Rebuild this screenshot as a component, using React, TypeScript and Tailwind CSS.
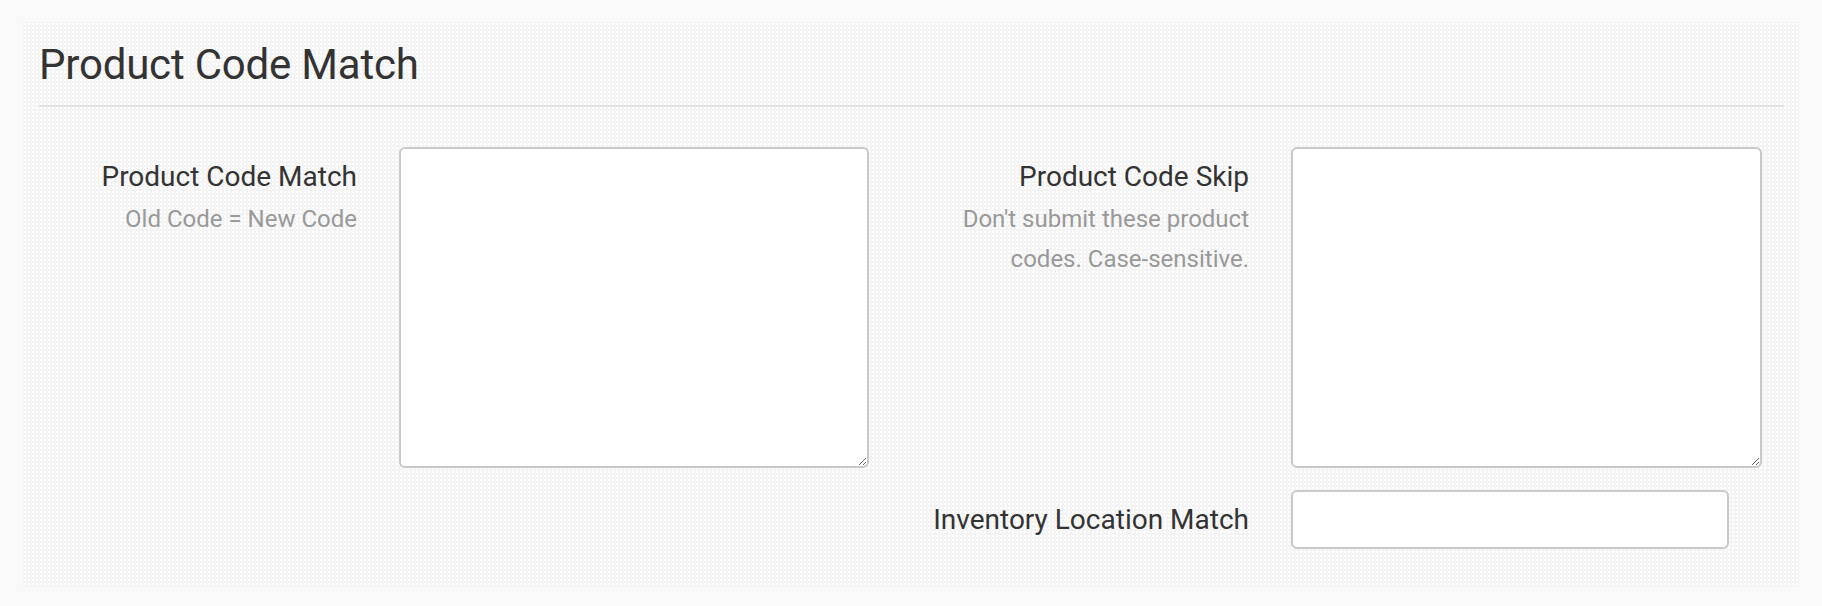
import React from 'react';

const App: React.FC = () => {
  return (
    <div
      className="min-h-[606px] w-full bg-[#f9f9f9] pt-[22px] pb-[23px] pl-[23px] pr-[23px] text-[#333]"
      style={{ fontFamily: 'Roboto, "Liberation Sans", sans-serif' }}
    >
      <div className="bg-[#f4f4f4] bg-[radial-gradient(circle,#ffffff_0.9px,transparent_1.4px)] bg-[length:4px_4px] pl-[16px] pr-[15px] pt-[20px] pb-[38px]">
        <h1 className="text-[42px] leading-[46px] font-normal tracking-[-0.2px]">Product Code Match</h1>
        <div className="mt-[17px] h-[2px] bg-[#e2e2e2]" />

        <div className="mt-[40px] grid grid-cols-[318px_470px_338px_471px] gap-x-[42px] gap-y-[22px]">
          {/* left field */}
          <div className="pt-[10px] text-right">
            <div className="text-[28px] leading-[40px] text-[#333]">Product Code Match</div>
            <div className="mt-[2px] text-[24px] leading-[40px] text-[#999]">Old Code = New Code</div>
          </div>
          <textarea className="block h-[321px] w-[470px] resize rounded-[6px] border-2 border-[#c9c9c9] bg-white outline-none" />

          {/* right field */}
          <div className="pt-[10px] text-right">
            <div className="text-[28px] leading-[40px] text-[#333]">Product Code Skip</div>
            <div className="mt-[2px] text-[24px] leading-[40px] text-[#999]">
              Don't submit these product codes. Case-sensitive.
            </div>
          </div>
          <textarea className="block h-[321px] w-[471px] resize rounded-[6px] border-2 border-[#c9c9c9] bg-white outline-none" />

          <div />
          <div />
          <div className="flex items-center justify-end">
            <span className="text-[28px] leading-[40px] text-[#333] whitespace-nowrap">Inventory Location Match</span>
          </div>
          <input
            type="text"
            className="block h-[59px] w-[438px] rounded-[6px] border-2 border-[#c9c9c9] bg-white outline-none"
          />
        </div>
      </div>
    </div>
  );
};

export default App;
